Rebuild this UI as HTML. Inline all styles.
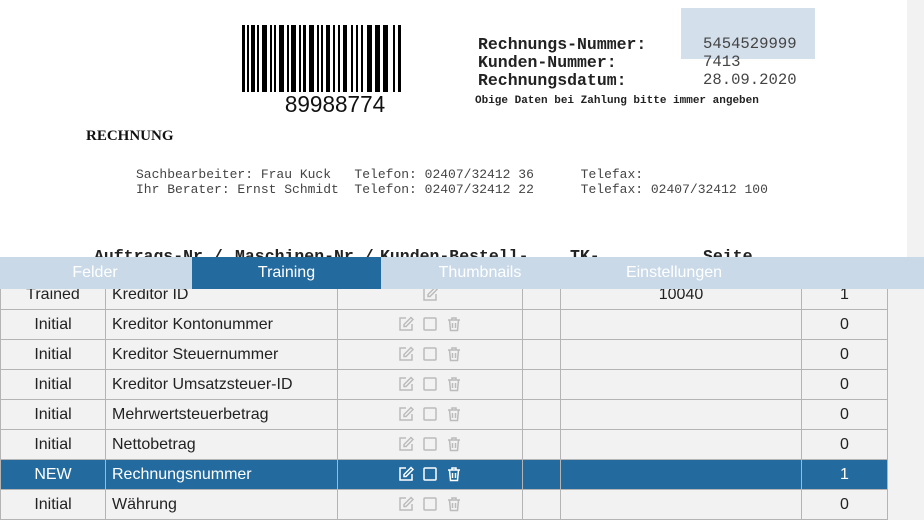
<!DOCTYPE html>
<html><head><meta charset="utf-8"><style>
*{margin:0;padding:0;box-sizing:border-box}
body{width:924px;height:520px;overflow:hidden;background:#f2f2f2;position:relative;font-family:"Liberation Sans",sans-serif}
.doc{position:absolute;left:0;top:0;width:907px;height:260px;background:#fff;overflow:hidden}
.m{font-family:"Liberation Mono",monospace;position:absolute;white-space:pre;color:#222}
.tabs{position:absolute;left:0;top:257px;width:924px;height:32px;background:#c9d9e8}
.tab{position:absolute;top:0;height:32px;line-height:31px;color:#fff;font-size:16px;text-align:center}
table{position:absolute;left:0;top:279px;border-collapse:collapse;font-size:16px;color:#222}
td{height:30px;border:1px solid #b4b4b4;padding:0 6px;background:#f2f2f2}
td:nth-child(1){width:105px;text-align:center}
td:nth-child(2){width:232px}
td:nth-child(3){width:185px;text-align:center}
td:nth-child(4){width:38px}
td:nth-child(5){width:241px;text-align:center}
td:nth-child(6){width:86px;text-align:center}
tr.sel td{background:#236b9e;color:#fff;border-color:#b4b4b4}
svg.i{vertical-align:middle;margin:0 4px}
</style></head><body>
<div class="doc">
<svg style="position:absolute;left:242px;top:25px" width="162" height="67">
<g fill="#000">
<rect x="0" y="0" width="3" height="67"/><rect x="5" y="0" width="2" height="67"/><rect x="9" y="0" width="4" height="67"/><rect x="15" y="0" width="2" height="67"/><rect x="20" y="0" width="5" height="67"/><rect x="28" y="0" width="2" height="67"/><rect x="32" y="0" width="2" height="67"/><rect x="37" y="0" width="5" height="67"/><rect x="45" y="0" width="2" height="67"/><rect x="49" y="0" width="5" height="67"/><rect x="57" y="0" width="2" height="67"/><rect x="61" y="0" width="3" height="67"/><rect x="67" y="0" width="5" height="67"/><rect x="75" y="0" width="2" height="67"/><rect x="79" y="0" width="2" height="67"/><rect x="84" y="0" width="4" height="67"/><rect x="91" y="0" width="2" height="67"/><rect x="96" y="0" width="2" height="67"/><rect x="101" y="0" width="4" height="67"/><rect x="109" y="0" width="2" height="67"/><rect x="114" y="0" width="2" height="67"/><rect x="119" y="0" width="2" height="67"/><rect x="125" y="0" width="5" height="67"/><rect x="133" y="0" width="5" height="67"/><rect x="141" y="0" width="5" height="67"/><rect x="151" y="0" width="2" height="67"/><rect x="156" y="0" width="3" height="67"/>
</g></svg>
<div style="position:absolute;left:242px;top:91px;width:186px;text-align:center;font-size:23px;color:#111;transform:scaleX(0.98)">89988774</div>
<div style="position:absolute;left:681px;top:8px;width:134px;height:51px;background:#d3dfea"></div>
<div class="m" style="left:478px;top:36px;font-size:16.5px;font-weight:bold;line-height:18px">Rechnungs-Nummer:
Kunden-Nummer:
Rechnungsdatum:</div>
<div class="m" style="left:703px;top:35px;font-size:15.6px;line-height:18px;color:#444">5454529999
7413
28.09.2020</div>
<div class="m" style="left:475px;top:95px;font-size:11px;font-weight:bold">Obige Daten bei Zahlung bitte immer angeben</div>
<div style="position:absolute;left:86px;top:128px;font-family:'Liberation Serif',serif;font-size:15px;font-weight:bold;color:#111">RECHNUNG</div>
<div class="m" style="left:136px;top:167px;font-size:13px;line-height:15px;color:#444">Sachbearbeiter: Frau Kuck   Telefon: 02407/32412 36      Telefax:
Ihr Berater: Ernst Schmidt  Telefon: 02407/32412 22      Telefax: 02407/32412 100</div>
<div class="m" style="left:94px;top:247px;font-size:16.5px;font-weight:bold">Auftrags-Nr /</div>
<div class="m" style="left:235px;top:247px;font-size:16.5px;font-weight:bold">Maschinen-Nr /</div>
<div class="m" style="left:380px;top:247px;font-size:16.5px;font-weight:bold">Kunden-Bestell-</div>
<div class="m" style="left:570px;top:247px;font-size:16.5px;font-weight:bold">TK-</div>
<div class="m" style="left:703px;top:247px;font-size:16.5px;font-weight:bold">Seite</div>
</div>
<table>
<tr><td>Trained</td><td>Kreditor ID</td><td><svg class="i" width="16" height="16" viewBox="0 0 16 16" fill="none" stroke="#bbb" stroke-width="1.5"><path d="M8 2H2v12h12V8"/><path d="M13 1.5l2 2-7 7H6V8.5z"/></svg></td><td></td><td>10040</td><td>1</td></tr>
<tr><td>Initial</td><td>Kreditor Kontonummer</td><td>ICONS</td><td></td><td></td><td>0</td></tr>
<tr><td>Initial</td><td>Kreditor Steuernummer</td><td>ICONS</td><td></td><td></td><td>0</td></tr>
<tr><td>Initial</td><td>Kreditor Umsatzsteuer-ID</td><td>ICONS</td><td></td><td></td><td>0</td></tr>
<tr><td>Initial</td><td>Mehrwertsteuerbetrag</td><td>ICONS</td><td></td><td></td><td>0</td></tr>
<tr><td>Initial</td><td>Nettobetrag</td><td>ICONS</td><td></td><td></td><td>0</td></tr>
<tr class="sel"><td>NEW</td><td>Rechnungsnummer</td><td>ICONSW</td><td></td><td></td><td>1</td></tr>
<tr><td>Initial</td><td>Währung</td><td>ICONS</td><td></td><td></td><td>0</td></tr>
</table>
<div class="tabs">
<div class="tab" style="left:0;width:190px">Felder</div>
<div class="tab" style="left:192px;width:189px;background:#236b9e">Training</div>
<div class="tab" style="left:381px;width:198px">Thumbnails</div>
<div class="tab" style="left:579px;width:190px">Einstellungen</div>
</div>
<script>
function ic(c){return '<svg class="i" width="16" height="16" viewBox="0 0 16 16" fill="none" stroke="'+c+'" stroke-width="1.5"><path d="M8 2H2v12h12V8"/><path d="M13 1.5l2 2-7 7H6V8.5z"/></svg><svg class="i" width="16" height="16" viewBox="0 0 16 16" fill="none" stroke="'+c+'" stroke-width="1.5"><rect x="2" y="2" width="12" height="12" rx="1"/></svg><svg class="i" width="16" height="16" viewBox="0 0 16 16" fill="none" stroke="'+c+'" stroke-width="1.5"><path d="M2 4h12M6 4V2h4v2M3.5 4l1 10.5h7L12.5 4M6.5 7v5M9.5 7v5"/></svg>';}
document.querySelectorAll('td').forEach(function(t){if(t.textContent=='ICONS')t.innerHTML=ic('#bbb');if(t.textContent=='ICONSW')t.innerHTML=ic('#fff');});
</script>
</body></html>
